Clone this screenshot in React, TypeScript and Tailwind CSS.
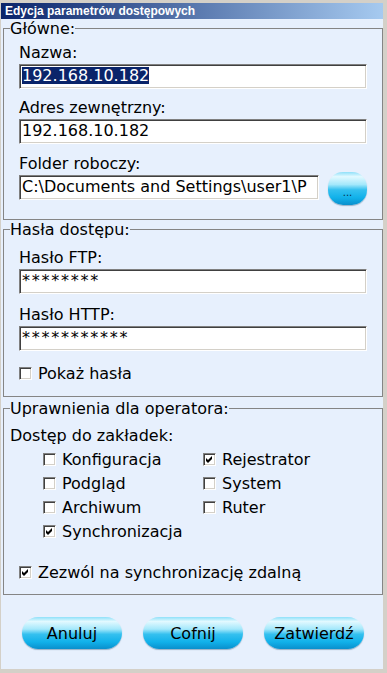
import React from "react";

// Windows-classic style dialog: "Edycja parametrów dostępowych"

const sunken =
  "border border-t-[#808080] border-l-[#808080] border-b-white border-r-white shadow-[inset_1px_1px_0_#404040,inset_-1px_-1px_0_#d4d0c8] bg-white";

const glossy =
  "bg-[linear-gradient(to_bottom,#8fe0f9_0%,#e2f9ff_14%,#a4e8fb_38%,#34c0ef_54%,#11b1ea_78%,#0a8fcc_100%)] shadow-[0_1px_1px_rgba(0,60,100,0.35)]";

const Check = ({ checked }: { checked?: boolean }) => (
  <span className={"w-[13px] h-[13px] shrink-0 flex items-center justify-center " + sunken}>
    {checked && (
      <svg width="11" height="11" viewBox="0 0 11 11">
        <polygon points="2,4 4,6 8,2 8,5 4,9 2,7" fill="#000" />
      </svg>
    )}
  </span>
);

const Field = ({ children, className = "" }: { children?: React.ReactNode; className?: string }) => (
  <div className={"h-[25px] pl-[2px] pt-px leading-[19px] whitespace-nowrap overflow-hidden " + sunken + " " + className}>
    {children}
  </div>
);

const Label = ({ text }: { text: string }) => <div className="leading-[19px] mb-[2px]">{text}</div>;

const Option = ({ label, checked }: { label: string; checked?: boolean }) => (
  <div className="h-[24px] flex items-center">
    <Check checked={checked} />
    <span className="ml-[6px] leading-[19px]">{label}</span>
  </div>
);

const Btn = ({ label }: { label: string }) => (
  <button className={"w-[100px] h-[32px] rounded-full text-black text-[16px] leading-[19px] " + glossy}>{label}</button>
);

export default function App() {
  return (
    <div className="w-[387px] h-[673px] bg-[#d4d0c8] pt-[3px] pl-px pr-[4px] pb-[4px] font-['DejaVu_Sans',sans-serif] text-[16px] text-black">
      <div className="h-full flex flex-col bg-[#e7f0fd]">
        <div className="h-4 shrink-0 bg-[linear-gradient(to_right,#0a246a,#a6caf0)] pl-[4px] text-white font-bold text-[12px] leading-4 font-['Liberation_Sans',sans-serif]">
          Edycja parametrów dostępowych
        </div>

        <div className="pl-[2px] flex-1 flex flex-col">
          {/* Główne */}
          <fieldset className="border border-[#858585] pl-[6px] pr-[15px] pt-[5px] pb-[19px]">
            <legend className="leading-[19px]">Główne:</legend>
            <div className="pl-[9px]">
              <Label text="Nazwa:" />
              <Field>
                <span className="inline-block align-top mt-px h-[17px] leading-[17px] bg-[#0a246a] text-white">192.168.10.182</span>
              </Field>
              <div className="mt-[9px]">
                <Label text="Adres zewnętrzny:" />
                <Field>192.168.10.182</Field>
              </div>
              <div className="mt-[10px]">
                <Label text="Folder roboczy:" />
                <div className="flex items-start">
                  <Field className="w-[300px]">C:\Documents and Settings\user1\P</Field>
                  <button className={"ml-[9px] -mt-[3px] -mb-[5px] w-[39px] h-[33px] rounded-[15px] flex items-end justify-center pb-[7px] text-[10px] leading-[10px] text-[#06304a] " + glossy}>
                    ...
                  </button>
                </div>
              </div>
            </div>
          </fieldset>

          {/* Hasła dostępu */}
          <fieldset className="border border-[#858585] pl-[6px] pr-[15px] pt-[9px] pb-[13px]">
            <legend className="leading-[19px]">Hasła dostępu:</legend>
            <div className="pl-[9px]">
              <Label text="Hasło FTP:" />
              <Field className="tracking-[1.75px]">********</Field>
              <div className="mt-[11px]">
                <Label text="Hasło HTTP:" />
                <Field className="tracking-[1.75px]">***********</Field>
              </div>
              <div className="mt-[13px] h-[19px] flex items-center">
                <Check />
                <span className="ml-[6px] leading-[19px]">Pokaż hasła</span>
              </div>
            </div>
          </fieldset>

          {/* Uprawnienia */}
          <fieldset className="mt-[2px] border border-[#858585] pl-[6px] pr-[15px] pt-[8px] pb-[10px]">
            <legend className="leading-[19px]">Uprawnienia dla operatora:</legend>
            <div className="leading-[19px]">Dostęp do zakładek:</div>
            <div className="mt-[2px] ml-[33px] grid grid-cols-[160px_1fr]">
              <Option label="Konfiguracja" />
              <Option label="Rejestrator" checked />
              <Option label="Podgląd" />
              <Option label="System" />
              <Option label="Archiwum" />
              <Option label="Ruter" />
              <Option label="Synchronizacja" checked />
            </div>
            <div className="mt-[17px] ml-[9px]">
              <Option label="Zezwól na synchronizację zdalną" checked />
            </div>
          </fieldset>

          <div className="mt-[22px] flex justify-center gap-[21px]">
            <Btn label="Anuluj" />
            <Btn label="Cofnij" />
            <Btn label="Zatwierdź" />
          </div>
        </div>
      </div>
    </div>
  );
}
